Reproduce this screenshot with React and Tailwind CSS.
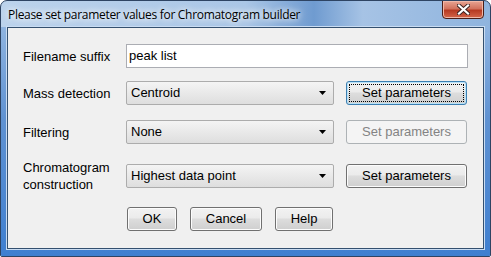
import React from "react";

const font = "font-['Liberation_Sans',Arial,sans-serif]";

const Arrow = () => (
    <svg width="7" height="4" viewBox="0 0 7 4" className="shrink-0">
        <path d="M0 0h7L3.5 4z" fill="#000" />
    </svg>
);

const Combo = ({ value }) => (
    <div className="w-[208px] h-[24px] flex items-center justify-between pl-[4px] pr-[7px] border border-[#acacac] rounded-[2px] bg-gradient-to-b from-[#f4f4f4] to-[#dedede] text-[13px] text-black">
        <span>{value}</span>
        <Arrow />
    </div>
);

const Button = ({ children, width, focused, disabled }) => {
    if (disabled) {
        return (
            <div className={`${width} h-[24px] flex items-center justify-center border border-[#adb2b5] rounded-[3px] bg-[#f4f4f4] text-[13px] text-[#838383]`}>
                {children}
            </div>
        );
    }
    return (
        <div
            className={`${width} h-[24px] relative flex items-center justify-center border rounded-[3px] text-[13px] text-black bg-[linear-gradient(to_bottom,#f2f2f2_0%,#ebebeb_45%,#dddddd_50%,#cfcfcf_100%)] ${
                focused ? "border-[#3c7fb1] shadow-[inset_0_0_0_1px_#b8e2f8]" : "border-[#707070] shadow-[inset_0_0_0_1px_#fcfcfc]"
            }`}
        >
            {focused && <div className="absolute inset-[2px] border border-dotted border-black" />}
            <span className="relative">{children}</span>
        </div>
    );
};

const Label = ({ children }) => (
    <div className="w-[103px] shrink-0 text-[13px] leading-[17px] text-black">{children}</div>
);

export default function App() {
    return (
        <div className={`w-[491px] h-[257px] bg-white ${font}`}>
            <div className="w-full h-full flex flex-col rounded-t-[7px] rounded-b-[2px] border border-[#2e4463] bg-[linear-gradient(to_right,#bcd3ec_0%,#aac6e6_50%,#6f9bd0_64%,#a6c3e5_74%,#8fb4de_100%)] overflow-hidden">
                <div className="h-[26px] shrink-0 relative flex items-start">
                    <span className="pl-[7px] pt-[6px] text-[12px] leading-[15px] text-black font-['Open_Sans',sans-serif] tracking-[-0.3px] [text-shadow:0_0_8px_#fff,0_0_6px_#fff]">
                        Please set parameter values for Chromatogram builder
                    </span>
                    <div className="absolute right-[6px] top-[-1px] w-[42px] h-[19px] rounded-b-[4px] border border-[#4b1e18] bg-[linear-gradient(to_bottom,#e8a493_0%,#d2725d_45%,#b63a22_55%,#d4664a_100%)] flex items-center justify-center shadow-[inset_0_0_0_1px_#f0b8a8]">
                        <svg width="13" height="11" viewBox="0 0 13 11">
                            <path d="M2 1.5l9 8M11 1.5l-9 8" stroke="#3a2220" strokeWidth="4" strokeLinecap="square" />
                            <path d="M2 1.5l9 8M11 1.5l-9 8" stroke="#fff" strokeWidth="2.2" strokeLinecap="square" />
                        </svg>
                    </div>
                </div>
                <div className="flex-1 flex px-[6px] pb-[7px] bg-[linear-gradient(to_bottom,#8fb4e0_0%,#5f92d2_40%,#3f7fd0_100%)]">
                    <div className="flex-1 border border-[#34506f] shadow-[0_0_0_1px_#c9dcf2] bg-[#f0f0f0] flex flex-col pl-[15px] pt-[16px]">
                        <div className="flex items-center h-[24px]">
                            <Label>Filename suffix</Label>
                            <div className="w-[342px] h-[24px] flex items-center pl-[2px] bg-white border border-[#abadb3] text-[13px] text-black">
                                peak list
                            </div>
                        </div>
                        <div className="flex items-center h-[24px] mt-[13px]">
                            <Label>Mass detection</Label>
                            <Combo value="Centroid" />
                            <div className="ml-[12px]">
                                <Button width="w-[121px]" focused>Set parameters</Button>
                            </div>
                        </div>
                        <div className="flex items-center h-[24px] mt-[15px]">
                            <Label>Filtering</Label>
                            <Combo value="None" />
                            <div className="ml-[12px]">
                                <Button width="w-[121px]" disabled>Set parameters</Button>
                            </div>
                        </div>
                        <div className="flex items-center h-[24px] mt-[20px]">
                            <Label>
                                Chromatogram
                                <br />
                                construction
                            </Label>
                            <Combo value="Highest data point" />
                            <div className="ml-[12px]">
                                <Button width="w-[121px]">Set parameters</Button>
                            </div>
                        </div>
                        <div className="flex items-center h-[24px] mt-[19px] pl-[104px] gap-[13px]">
                            <Button width="w-[50px]">OK</Button>
                            <Button width="w-[72px]">Cancel</Button>
                            <Button width="w-[58px]">Help</Button>
                        </div>
                    </div>
                </div>
            </div>
        </div>
    );
}
